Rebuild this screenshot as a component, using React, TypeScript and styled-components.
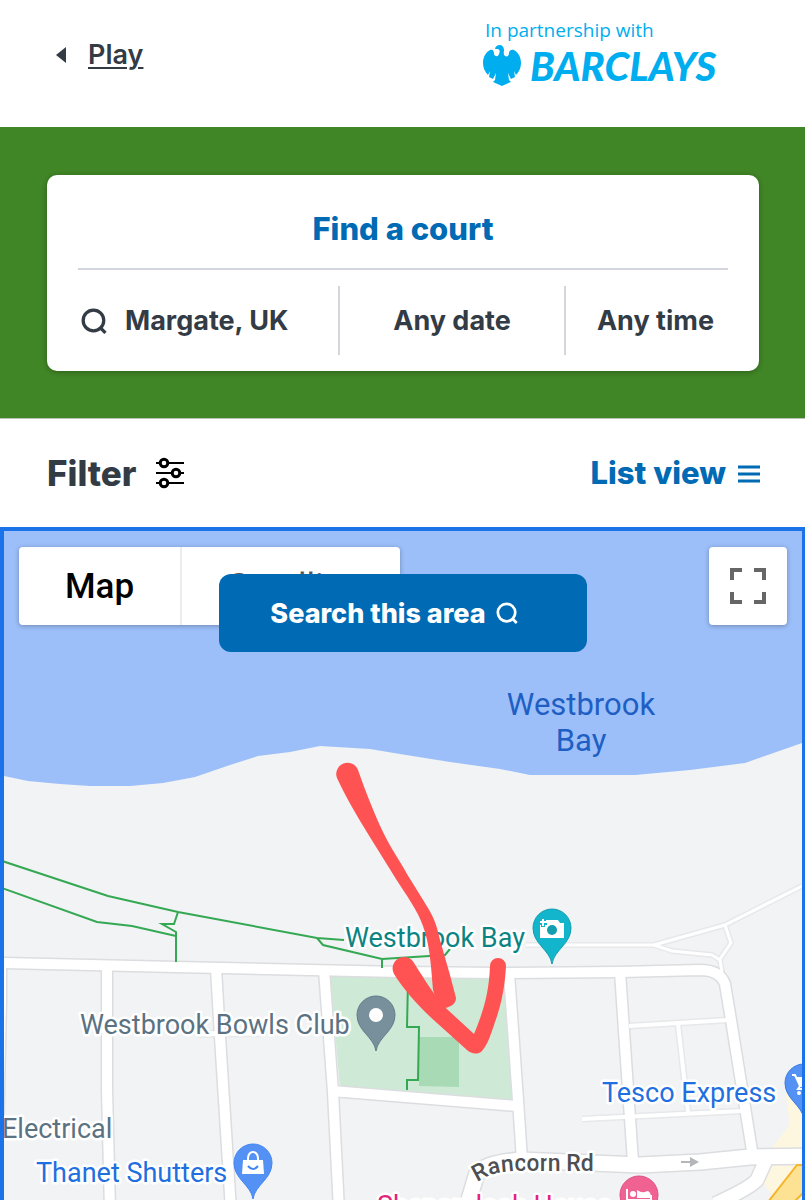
import React from "react";
import styled, { createGlobalStyle } from "styled-components";

const color = {
  ink: "#333b45",
  blue: "#006ab4",
  green: "#408526",
  line: "#d3d6dc",
  barclays: "#00aeef",
  focus: "#1a73e8",
};

const GlobalStyle = createGlobalStyle`
  *, *::before, *::after { box-sizing: border-box; }
  body { margin: 0; background: #fff; color: ${color.ink}; font-family: Inter, "Liberation Sans", sans-serif; }
  button, input { font: inherit; color: inherit; background: none; border: 0; padding: 0; margin: 0; }
  button { cursor: pointer; }
  svg { display: block; flex: none; }
`;

const Page = styled.div`
  display: flex;
  flex-direction: column;
  min-height: 100vh;
`;

const Header = styled.header`
  display: flex;
  justify-content: space-between;
  align-items: flex-start;
  min-height: 127px;
  padding: 16px 80px 32px 56px;
`;

const BackLink = styled.a`
  display: flex;
  align-items: center;
  gap: 22px;
  margin-top: 21px;
  color: ${color.ink};
  font-size: 27px;
  font-weight: 600;
  line-height: 36px;
  text-decoration: none;
  span { text-decoration: underline; text-underline-offset: 3px; text-decoration-thickness: 2px; }
`;

const Sponsor = styled.div`
  width: 242px;
  color: ${color.barclays};
`;

const SponsorNote = styled.p`
  margin: 0;
  padding-left: 2px;
  font: 400 19px/28px "Open Sans", sans-serif;
`;

const SponsorBrand = styled.div`
  display: flex;
  align-items: center;
  gap: 9px;
  font: italic 900 40px/44px Lato, sans-serif;
`;

const Hero = styled.section`
  padding: 48px 46px 47px 47px;
  background: ${color.green};
  border-bottom: 1px solid #b9c2b4;
`;

const SearchCard = styled.form`
  border-radius: 10px;
  background: #fff;
  box-shadow: 0 1px 5px rgba(0, 0, 0, 0.3);
`;

const CardTitle = styled.h1`
  margin: 0 31px;
  padding: 34px 0 19px;
  border-bottom: 2px solid ${color.line};
  color: ${color.blue};
  font-size: 31px;
  font-weight: 800;
  line-height: 40px;
  text-align: center;
`;

const Fields = styled.div`
  display: grid;
  grid-template-columns: 260fr 226fr 181fr;
  padding: 16px 14px 16px 31px;
  font-size: 27px;
  font-weight: 700;
  line-height: 36px;
`;

const PlaceField = styled.label`
  display: flex;
  align-items: center;
  gap: 18px;
  height: 69px;
  padding-left: 3px;
  input { width: 100%; min-width: 0; outline: 0; }
`;

const FieldButton = styled.button`
  border-left: 2px solid ${color.line};
`;

const Toolbar = styled.div`
  display: flex;
  justify-content: space-between;
  align-items: center;
  height: 108px;
  padding: 0 45px 0 47px;
`;

const ToolButton = styled.button<{ $accent?: boolean }>`
  display: flex;
  align-items: center;
  gap: ${(p) => (p.$accent ? 12 : 18)}px;
  color: ${(p) => (p.$accent ? color.blue : color.ink)};
  font-size: ${(p) => (p.$accent ? 31 : 35)}px;
  font-weight: 800;
  line-height: 40px;
`;

const MapFrame = styled.main`
  position: relative;
  flex: 1;
  min-height: 673px;
  overflow: hidden;
  border: solid ${color.focus};
  border-width: 4px 3px 0 4px;
  background: #f1f3f4;
`;

const MapCanvas = styled.svg`
  position: absolute;
  inset: 0;
  width: 100%;
  height: 100%;
  font-family: Roboto, sans-serif;
`;

const MapControls = styled.div`
  position: relative;
  display: flex;
  justify-content: space-between;
  padding: 16px 15px;
`;

const TypeSwitch = styled.div`
  display: flex;
  border-radius: 4px;
  background: #fff;
  box-shadow: 0 1px 5px rgba(0, 0, 0, 0.3);
`;

const TypeButton = styled.button<{ $active?: boolean }>`
  height: 78px;
  padding: 2px 46px 0;
  color: ${(p) => (p.$active ? "#000" : "#565656")};
  font: ${(p) => (p.$active ? 500 : 400)} 35px/44px Roboto, sans-serif;
  & + & { border-left: 2px solid #ececec; }
`;

const FullscreenButton = styled.button`
  display: grid;
  place-items: center;
  width: 78px;
  height: 78px;
  border-radius: 4px;
  background: #fff;
  box-shadow: 0 1px 5px rgba(0, 0, 0, 0.3);
`;

const SearchArea = styled.button`
  position: absolute;
  top: 43px;
  left: 50%;
  display: flex;
  align-items: center;
  justify-content: center;
  gap: 10px;
  width: 368px;
  height: 78px;
  padding-right: 18px;
  border-radius: 12px;
  background: ${color.blue};
  color: #fff;
  font-size: 27px;
  font-weight: 800;
  white-space: nowrap;
  transform: translateX(-50%);
`;

const Magnifier = ({ size, stroke }: { size: number; stroke: number }) => (
  <svg width={size} height={size} viewBox="0 0 24 24" fill="none" stroke="currentColor" strokeWidth={stroke} aria-hidden="true">
    <circle cx="11.500" cy="11.500" r="9.500" />
    <path d="M17.500 17.800 22.600 23" />
  </svg>
);

const Eagle = () => (
  <svg width="38" height="42" viewBox="0 0 38 42" fill="currentColor" aria-hidden="true">
    <path d="M7 5C3 7 0 12 0 18 0 23 2 27 5 30L7 26 6 32 10 34 13 28 12 35 10 37C13 38 16 40 19 41 22 40 25 38 28 37L26 35 25 28 28 34 32 32 31 26 33 30C36 27 38 23 38 18 38 12 35 7 31 5 28 4 26 6 26 8 26 11 24 12 22 11 20 9 21 7 21 5 21 2 19 0 17 0 14 0 12 2 12 4L15 4C17 5 17 7 16 9 15 12 12 12 11 9 11 6 10 4 7 5Z" />
  </svg>
);

const Sliders = () => (
  <svg width="30" height="32" viewBox="0 0 30 32" fill="#fff" stroke="#000" strokeWidth="3" aria-hidden="true">
    <path d="M1 6h28M1 16h28M1 26h28" strokeWidth="2" />
    <circle cx="9" cy="6" r="3.800" />
    <circle cx="21" cy="16" r="3.800" />
    <circle cx="9" cy="26" r="3.800" />
  </svg>
);

const ROADS: { d: string; w: number }[] = [
  { d: "M802 886 725 925 654 945H526", w: 3 },
  { d: "M654 945 672 951 712 955 720 960 722 972", w: 3 },
  { d: "M725 925 731 943 720 959", w: 3 },
  { d: "M198 1034 262 1033", w: 5 },
  { d: "M629 1026 728 1020M678 1024 688 1112M582 1119 742 1111", w: 4 },
  { d: "M1 960V1000L-2 1140", w: 10 },
  { d: "M107 965 107 1090 110 1210M216 968 220 1037 231 1210M324 970 333 1092 339 1210M332 1091 517 1106M509 973 518 1100 522 1160M620 972 626 1060 633 1162", w: 10 },
  { d: "M0 963 176 967 400 972 500 973 620 972 700 970Q720 970 725 984L731 1020 753 1157", w: 10 },
  { d: "M466 1210 476 1176Q479 1164 520 1160L640 1165 700 1162 750 1157 810 1156", w: 15 },
  { d: "M766 1160 757 1180Q750 1188 715 1204", w: 13 },
];

const PATHS = [
  "M2 861 108 896 178 912 317 938 344 940",
  "M2 888 97 922 132 926 176 936",
  "M178 912 174 924 162 924 176 932V962",
  "M317 938 323 945 382 959 445 955 450 949M382 959V968",
  "M408 980 407 1027H419L418 1080H407V1090",
];

const Pin = ({ x, y, fill, edge, children }: { x: number; y: number; fill: string; edge: string; children: React.ReactNode }) => (
  <g transform={`translate(${x} ${y})`}>
    <path d="M0 36C-2 22-19 16-19 0A19 19 0 0 1 19 0C19 16 2 22 0 36Z" fill={fill} stroke={edge} />
    {children}
  </g>
);

const Label = styled.text<{ $size?: number }>`
  font-size: ${(p) => p.$size ?? 27}px;
  paint-order: stroke;
  stroke: #fff;
  stroke-width: 5px;
  stroke-linejoin: round;
`;

const TownMap = () => (
  <MapCanvas viewBox="4 531 798 669" preserveAspectRatio="xMidYMin slice" role="img" aria-label="Map of Westbrook Bay">
    <path d="M-400 531H1200V743H802L745 763 690 770 635 775H530L500 769 450 762 400 754 370 749 320 746 290 752 258 756 230 765 195 777 163 783 130 786H90L60 784 28 781 4 776H-400Z" fill="#9cbffa" />
    <path d="M802 1085 785 1090 790 1125 770 1150 755 1170 775 1200H810Z" fill="#fef7e0" />
    <path d="M330 974 505 978 513 1100 340 1088Z" fill="#ceead6" />
    <path d="M419 1037H459V1087L419 1086Z" fill="#a8dab5" />

    <g fill="none" strokeLinejoin="round">
      {ROADS.map((r) => <path key={r.d} d={r.d} stroke={r.w < 6 ? "#e6e8ea" : "#dcdde0"} strokeWidth={r.w + 3} />)}
      {ROADS.map((r) => <path key={r.d} d={r.d} stroke="#fff" strokeWidth={r.w} />)}
    </g>
    <path d="M768 1202 797 1165H806V1190L794 1202Z" fill="#fde293" stroke="#f5b52c" strokeWidth="2" />
    <g fill="none" stroke="#34a853" strokeWidth="2">
      {PATHS.map((d) => <path key={d} d={d} />)}
    </g>
    <path d="M681 1161h9v-4l9 5-9 5v-4h-9z" fill="#b4b6b9" />

    <g fill="#1f5fc4" fontSize="31" textAnchor="middle">
      <text x="581" y="715">Westbrook</text>
      <text x="581" y="751">Bay</text>
    </g>
    <Label x="345" y="947" fill="#0d8484">Westbrook Bay</Label>
    <Label x="80" y="1034" fill="#5b7282">Westbrook Bowls Club</Label>
    <Label x="2" y="1138" fill="#5b7282">Electrical</Label>
    <Label x="36" y="1182" fill="#1f6fe0">Thanet Shutters</Label>
    <Label x="602" y="1102" fill="#1f6fe0">Tesco Express</Label>
    <Label x="377" y="1215" fill="#e5217c">Shenandoah House</Label>
    <path id="rancorn" d="M477 1182 490 1175Q502 1171 520 1171L620 1171" fill="none" />
    <Label $size={23} fill="#4d4f52" fontWeight="500"><textPath href="#rancorn">Rancorn Rd</textPath></Label>

    <Pin x={376} y={1015} fill="#78909c" edge="#607d8b"><circle r="7" fill="#fff" /></Pin>
    <Pin x={552} y={928} fill="#12b5cb" edge="#129eaf">
      <path d="M-12-3H-6V-8H-1L1-8H6L8-5H12V10H-12Z" fill="#fff" />
      <circle cy="2" r="5" fill="#129eaf" />
      <path d="M-9-9v8M-13-5h8" stroke="#12b5cb" strokeWidth="4" />
      <path d="M-9-9v7M-12-6h7" stroke="#fff" strokeWidth="2" />
    </Pin>
    <Pin x={253} y={1163} fill="#5491f5" edge="#4285f4">
      <path d="M-10-3H10L11 11H-11Z" fill="#fff" />
      <path d="M-5-2V-5A5 6 0 0 1 5-5V-2" fill="none" stroke="#fff" strokeWidth="2" />
      <path d="M-5 3Q0 9 5 3" fill="none" stroke="#4285f4" strokeWidth="2" />
    </Pin>
    <Pin x={804} y={1083} fill="#5491f5" edge="#3b78e7">
      <path d="M-12-8H-9L-4 3H8" fill="none" stroke="#fff" strokeWidth="2" />
      <path d="M-8-6H8L5 2H-4Z" fill="#fff" />
      <path d="M-4 3-6 6H8" fill="none" stroke="#fff" strokeWidth="2" />
      <circle cx="-5" cy="10" r="2" fill="#fff" />
    </Pin>
    <Pin x={639} y={1195} fill="#f06292" edge="#e04f85">
      <path d="M-12-6V10M12 10V0M-12 5H12" stroke="#fff" strokeWidth="2" fill="none" />
      <circle cx="-6" cy="-1" r="3" fill="#fff" />
      <path d="M-2-5Q4-1 8-4 12-4 12 3H-2Z" fill="#fff" />
    </Pin>

    <g fill="#ff5252">
      <path d="M337 778A11 11 0 1 1 358 770C366 793 375 815 383 832 390 847 400 861 407 874L428 908C434 918 437 926 440 940L450 975 456 998C456 1005 448 1009 439 1008L433 990C431 966 430 945 423 926 418 911 405 893 396 879L373 842C362 824 347 800 337 778Z" />
      <path d="M394 974A11 11 0 0 1 414 963C423 977 437 1000 448 1010L474 1034C483 1012 489 994 490 966A8 8 0 0 1 506 966C505 985 502 1003 495 1022 491 1034 488 1044 482 1051 478 1055 471 1054 467 1050L437 1023C420 1008 404 990 394 974Z" />
    </g>
  </MapCanvas>
);

export default function App() {
  return (
    <Page>
      <GlobalStyle />
      <Header>
        <BackLink href="#play">
          <svg width="10" height="16" viewBox="0 0 10 16" fill="currentColor" aria-hidden="true"><path d="M10 0V16L0 8Z" /></svg>
          <span>Play</span>
        </BackLink>
        <Sponsor>
          <SponsorNote>In partnership with</SponsorNote>
          <SponsorBrand><Eagle />BARCLAYS</SponsorBrand>
        </Sponsor>
      </Header>
      <Hero>
        <SearchCard>
          <CardTitle>Find a court</CardTitle>
          <Fields>
            <PlaceField>
              <Magnifier size={26} stroke={3} />
              <input type="text" aria-label="Location" defaultValue="Margate, UK" />
            </PlaceField>
            <FieldButton type="button">Any date</FieldButton>
            <FieldButton type="button">Any time</FieldButton>
          </Fields>
        </SearchCard>
      </Hero>
      <Toolbar>
        <ToolButton type="button">Filter <Sliders /></ToolButton>
        <ToolButton type="button" $accent>
          List view
          <svg width="22" height="20" viewBox="0 0 22 20" stroke="currentColor" strokeWidth="3" aria-hidden="true"><path d="M0 4H22M0 11H22M0 18H22" /></svg>
        </ToolButton>
      </Toolbar>
      <MapFrame>
        <TownMap />
        <MapControls>
          <TypeSwitch>
            <TypeButton type="button" $active>Map</TypeButton>
            <TypeButton type="button">Satellite</TypeButton>
          </TypeSwitch>
          <FullscreenButton type="button" aria-label="Toggle fullscreen view">
            <svg width="36" height="36" viewBox="0 0 36 36" fill="none" stroke="#666" strokeWidth="4" aria-hidden="true"><path d="M2 12V2H12M24 2H34V12M34 24V34H24M12 34H2V24" /></svg>
          </FullscreenButton>
        </MapControls>
        <SearchArea type="button">Search this area <Magnifier size={22} stroke={3} /></SearchArea>
      </MapFrame>
    </Page>
  );
}
